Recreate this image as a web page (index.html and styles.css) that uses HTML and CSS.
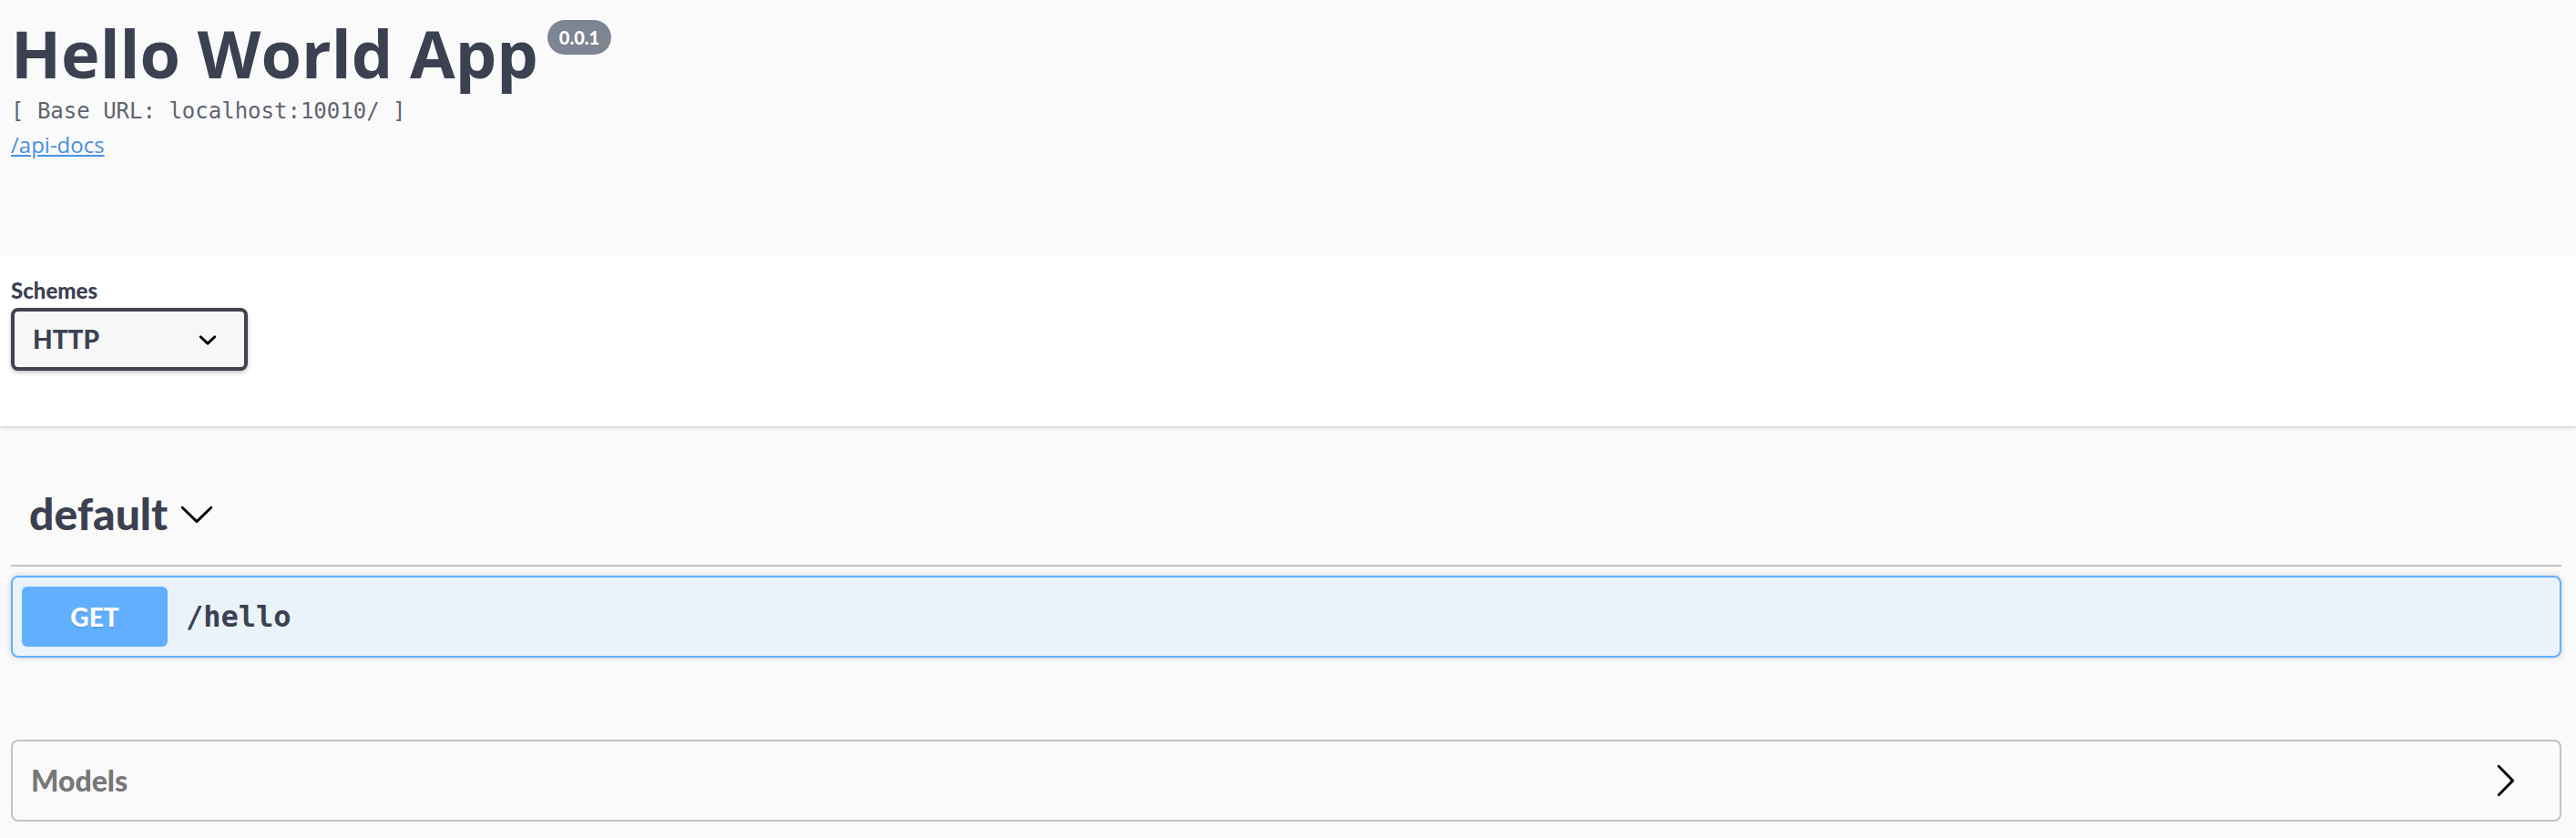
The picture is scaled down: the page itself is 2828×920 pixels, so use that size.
FILE: index.html
```html
<!DOCTYPE html>
<html lang="en">
<head>
<meta charset="utf-8">
<title>Hello World App</title>
<link rel="stylesheet" href="styles.css">
</head>
<body>
<div class="page">
  <section class="info wrap">
    <h2 class="title"><span class="title-text">Hello World App</span><small class="version">0.0.1</small></h2>
    <pre class="base-url">[ Base URL: localhost:10010/ ]</pre>
    <a class="docs-link" href="#">/api-docs</a>
  </section>

  <section class="scheme-container">
    <div class="wrap">
      <div class="schemes">
        <span class="schemes-title">Schemes</span>
        <div class="select">
          <span class="select-value">HTTP</span>
          <svg class="select-arrow" viewBox="0 0 20 20" width="40" height="40" aria-hidden="true"><path d="M13.418 7.859a.695.695 0 0 1 .978 0 .68.68 0 0 1 0 .969l-3.908 3.83a.697.697 0 0 1-.979 0l-3.908-3.83a.68.68 0 0 1 0-.969.695.695 0 0 1 .978 0L10 11l3.418-3.141z"/></svg>
        </div>
      </div>
    </div>
  </section>

  <div class="wrap ops">
    <h4 class="tag">
      <span class="tag-name">default</span>
      <svg class="tag-arrow" viewBox="0 0 20 20" width="40" height="40" aria-hidden="true"><path d="M17.418 6.109c.272-.268.709-.268.979 0s.271.701 0 .969l-7.908 7.83c-.27.268-.707.268-.979 0l-7.908-7.83c-.27-.268-.27-.701 0-.969.271-.268.709-.268.979 0L10 13.25l7.418-7.141z"/></svg>
    </h4>

    <div class="opblock opblock-get">
      <div class="opblock-summary">
        <span class="method">GET</span>
        <span class="path">/hello</span>
      </div>
    </div>

    <section class="models">
      <h4 class="models-title">
        <span>Models</span>
        <svg class="models-arrow" viewBox="0 0 20 20" width="40" height="40" aria-hidden="true"><g transform="rotate(-90 10 10)"><path d="M17.418 6.109c.272-.268.709-.268.979 0s.271.701 0 .969l-7.908 7.83c-.27.268-.707.268-.979 0l-7.908-7.83c-.27-.268-.27-.701 0-.969.271-.268.709-.268.979 0L10 13.25l7.418-7.141z"/></g></svg>
      </h4>
    </section>
  </div>
</div>
</body>
</html>
```

FILE: styles.css
```css
* { box-sizing: border-box; }

html, body {
  margin: 0;
  padding: 0;
  background: #fafafa;
}

body {
  font-family: "Open Sans", "Noto Sans", sans-serif;
  color: #3b4151;
}

.wrap {
  padding: 0 16px 0 12px;
}

/* ---------- info ---------- */
.info {
  padding-top: 18px;
  padding-bottom: 107px;
}

.title {
  display: flex;
  align-items: flex-start;
  margin: 0;
  font-family: "Open Sans", sans-serif;
  font-weight: 700;
  font-size: 72px;
  line-height: 80px;
  color: #3b4151;
}

.version {
  margin: 4px 0 0 10px;
  padding: 0 13px;
  border-radius: 114px;
  background: #7d8492;
  color: #fff;
  font-family: "Lato", sans-serif;
  font-weight: 900;
  font-size: 20px;
  line-height: 38px;
}

.base-url {
  margin: 10px 0 0;
  font-family: "DejaVu Sans Mono", monospace;
  font-size: 24px;
  line-height: 28px;
  color: #5f6470;
}

.docs-link {
  display: inline-block;
  margin-top: 9px;
  font-family: "Open Sans", sans-serif;
  font-size: 24px;
  line-height: 28px;
  color: #4990e2;
  text-decoration: underline;
}

/* ---------- schemes ---------- */
.scheme-container {
  background: #fff;
  padding: 25px 0 61px;
  box-shadow: 0 2px 4px 0 rgba(0, 0, 0, 0.15);
}

.schemes {
  display: flex;
  flex-direction: column;
  align-items: flex-start;
}

.schemes-title {
  font-family: "Lato", sans-serif;
  font-weight: 900;
  font-size: 24px;
  line-height: 28px;
  color: #3b4151;
}

.select {
  margin-top: 5px;
  width: 260px;
  display: flex;
  align-items: center;
  justify-content: space-between;
  padding: 10px 20px;
  border: 4px solid #41444e;
  border-radius: 8px;
  background: #f7f7f7;
  box-shadow: 0 2px 4px 0 rgba(0, 0, 0, 0.25);
}

.select-value {
  font-family: "Lato", sans-serif;
  font-weight: 900;
  font-size: 28px;
  line-height: 41px;
  color: #3b4151;
}

.select-arrow {
  display: block;
  fill: #000;
}

/* ---------- operations ---------- */
.ops {
  margin-top: 40px;
}

.tag {
  display: flex;
  align-items: center;
  margin: 0 0 10px;
  padding: 20px 40px 20px 20px;
  border-bottom: 2px solid rgba(59, 65, 81, 0.3);
  font-family: "Lato", sans-serif;
  font-weight: 900;
  font-size: 48px;
  line-height: 72px;
  color: #3b4151;
}

.tag-arrow {
  display: block;
  margin-left: 12px;
  fill: #000;
}

.opblock {
  border: 2px solid #61affe;
  border-radius: 8px;
  background: rgba(97, 175, 254, 0.1);
  box-shadow: 0 0 6px rgba(0, 0, 0, 0.19);
}

.opblock-summary {
  display: flex;
  align-items: center;
  padding: 10px;
}

.method {
  min-width: 160px;
  padding: 12px 30px;
  border-radius: 6px;
  background: #61affe;
  text-align: center;
  font-family: "Lato", sans-serif;
  font-weight: 900;
  font-size: 28px;
  line-height: 42px;
  color: #fff;
  text-shadow: 0 2px 0 rgba(0, 0, 0, 0.1);
}

.path {
  padding: 0 20px;
  font-family: "DejaVu Sans Mono", monospace;
  font-weight: 700;
  font-size: 32px;
  line-height: 42px;
  color: #3b4151;
}

/* ---------- models ---------- */
.models {
  margin-top: 90px;
  border: 2px solid rgba(59, 65, 81, 0.3);
  border-radius: 8px;
}

.models-title {
  display: flex;
  align-items: center;
  justify-content: space-between;
  margin: 0;
  padding: 20px 40px 20px 20px;
  font-family: "Lato", sans-serif;
  font-weight: 900;
  font-size: 32px;
  line-height: 46px;
  color: #777;
}

.models-arrow {
  display: block;
  fill: #000;
}
```
